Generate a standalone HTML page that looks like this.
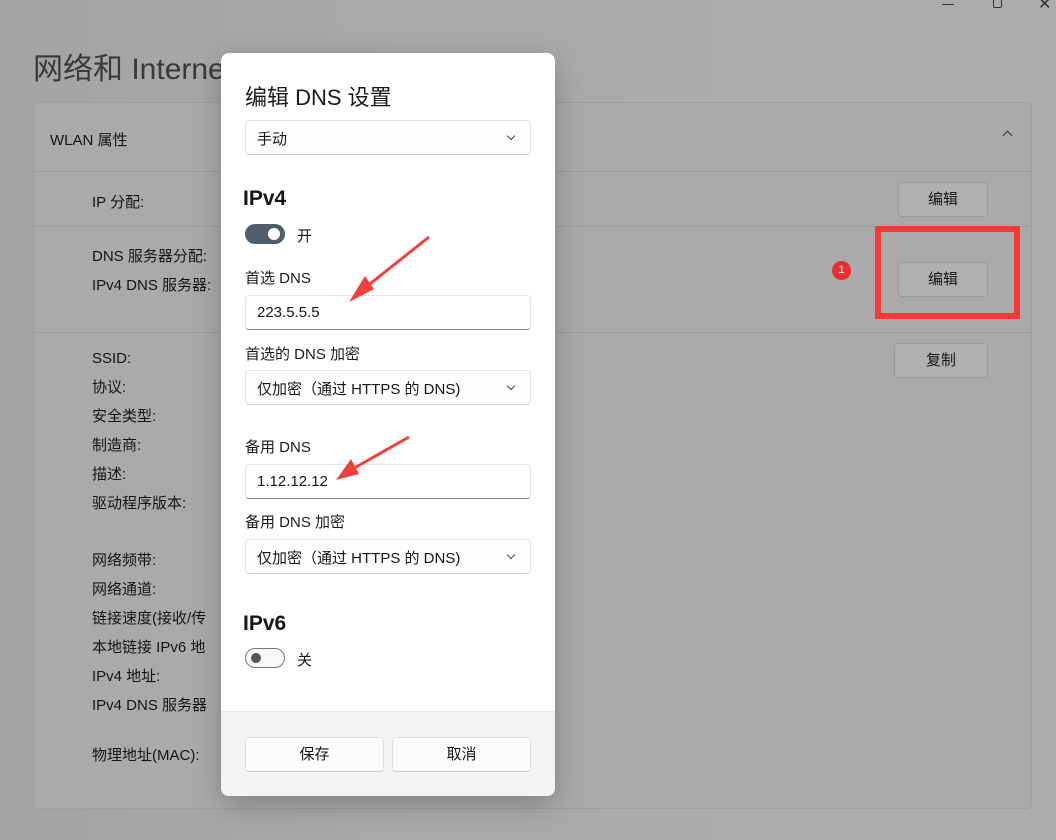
<!DOCTYPE html>
<html><head><meta charset="utf-8"><style>
*{margin:0;padding:0;box-sizing:border-box}
body{width:1056px;height:840px;overflow:hidden;background:linear-gradient(90deg,#a2a3a4,#ababab 40%,#acacac);font-family:"Liberation Sans","Noto Sans CJK SC",sans-serif;color:#161616;position:relative}
.a{position:absolute;white-space:nowrap}
.t{font-size:15px}
.card{position:absolute;left:33px;top:102px;width:999px;height:707px;border:1px solid #9e9e9e;border-radius:5px;background:#aaaaaa}
.hr{position:absolute;left:34px;width:997px;height:1px;background:#9c9c9c}
.btn{position:absolute;border:1px solid #999;border-radius:4px;background:#b0b0b0;font-size:15px;text-align:center}
.dlg{position:absolute;left:221px;top:53px;width:334px;height:743px;background:#fff;border-radius:8px;box-shadow:0 8px 30px rgba(0,0,0,.25);overflow:hidden}
.in{position:absolute;left:24px;width:286px;height:35px;border:1px solid #e3e3e3;border-bottom:1px solid #8a8a8a;border-radius:4px;background:#fff;font-size:15px;padding:8px 11px}
.sel{position:absolute;left:24px;width:286px;height:35px;border:1px solid #e3e3e3;border-bottom-color:#cfcfcf;border-radius:4px;background:#fdfdfd;font-size:15px;padding:7px 11px}
.sel:after{content:"";position:absolute;right:16px;top:12px;width:5px;height:5px;border-right:1px solid #444;border-bottom:1px solid #444;transform:rotate(45deg)}
.lb{position:absolute;left:24px;font-size:15px;color:#1b1b1b}
.foot{position:absolute;left:0;top:658px;width:334px;height:85px;background:#f3f3f3;border-top:1px solid #e5e5e5}
.fb{position:absolute;top:25px;width:139px;height:35px;border:1px solid #e0e0e0;border-bottom-color:#ccc;border-radius:4px;background:#fbfbfb;font-size:15px;text-align:center;line-height:33px}
</style></head><body>
<div class="a" style="left:942px;top:4px;width:12px;height:1px;background:#333"></div>
<div class="a" style="left:993px;top:-4px;width:9px;height:12px;border:1px solid #333;border-radius:2px"></div>
<div class="a" style="left:1038px;top:-6px;font-size:16px;color:#333">✕</div>
<div class="a" style="left:33px;top:44px;font-size:30px;color:#3a3a3a">网络和 Internet</div>
<div class="card"></div>
<div class="a t" style="left:50px;top:129px">WLAN 属性</div>
<div class="a" style="left:1004px;top:132px;width:7px;height:7px;border-left:1.5px solid #333;border-top:1.5px solid #333;transform:rotate(45deg)"></div>
<div class="hr" style="top:171px"></div>
<div class="hr" style="top:226px"></div>
<div class="hr" style="top:332px"></div>
<div class="a t" style="left:92px;top:191px">IP 分配:</div>
<div class="btn" style="left:898px;top:182px;width:90px;height:35px;line-height:33px">编辑</div>
<div class="a t" style="left:92px;top:245px">DNS 服务器分配:</div>
<div class="a t" style="left:92px;top:274px">IPv4 DNS 服务器:</div>
<div class="a" style="left:832px;top:261px;width:19px;height:19px;border-radius:50%;background:#e8302e;color:#fff;font-size:11px;text-align:center;line-height:19px">1</div>
<div class="a" style="left:875px;top:226px;width:145px;height:93px;border:6px solid #fc3837"></div>
<div class="btn" style="left:898px;top:262px;width:90px;height:35px;line-height:33px">编辑</div>
<div class="btn" style="left:894px;top:343px;width:94px;height:35px;line-height:33px">复制</div>
<div class="a t" style="left:92px;top:344px;line-height:29px">SSID:<br>协议:<br>安全类型:<br>制造商:<br>描述:<br>驱动程序版本:</div>
<div class="a t" style="left:92px;top:546px;line-height:29px">网络频带:<br>网络通道:<br>链接速度(接收/传<br>本地链接 IPv6 地<br>IPv4 地址:<br>IPv4 DNS 服务器</div>
<div class="a t" style="left:92px;top:744px">物理地址(MAC):</div>

<div class="dlg">
<div class="a" style="left:24px;top:27px;font-size:22px;color:#1a1a1a">编辑 DNS 设置</div>
<div class="sel" style="top:67px">手动</div>
<div class="a" style="left:22px;top:134px;font-size:21px;font-weight:bold">IPv4</div>
<div class="a" style="left:24px;top:171px;width:40px;height:20px;border-radius:10px;background:#4f5e68"></div>
<div class="a" style="left:47px;top:175px;width:12px;height:12px;border-radius:50%;background:#fff"></div>
<div class="a t" style="left:76px;top:172px">开</div>
<div class="lb" style="top:214px">首选 DNS</div>
<div class="in" style="top:242px">223.5.5.5</div>
<div class="lb" style="top:290px">首选的 DNS 加密</div>
<div class="sel" style="top:317px">仅加密（通过 HTTPS 的 DNS)</div>
<div class="lb" style="top:383px">备用 DNS</div>
<div class="in" style="top:411px">1.12.12.12</div>
<div class="lb" style="top:458px">备用 DNS 加密</div>
<div class="sel" style="top:486px">仅加密（通过 HTTPS 的 DNS)</div>
<div class="a" style="left:22px;top:559px;font-size:21px;font-weight:bold">IPv6</div>
<div class="a" style="left:24px;top:595px;width:40px;height:20px;border-radius:10px;border:1px solid #777;background:#f8f8f8"></div>
<div class="a" style="left:30px;top:600px;width:10px;height:10px;border-radius:50%;background:#555"></div>
<div class="a t" style="left:76px;top:596px">关</div>
<svg class="a" style="left:0;top:0" width="334" height="500">
<path d="M208 184 L140 238" stroke="#f2403a" stroke-width="3" fill="none"/>
<path d="M128 249 L144 223 L153 236 Z" fill="#f2403a"/>
<path d="M188 384 L128 418" stroke="#f2403a" stroke-width="3" fill="none"/>
<path d="M115 427 L130 406 L138 421 Z" fill="#f2403a"/>
</svg>
<div class="foot">
<div class="fb" style="left:24px">保存</div>
<div class="fb" style="left:171px">取消</div>
</div>
</div>
</body></html>
